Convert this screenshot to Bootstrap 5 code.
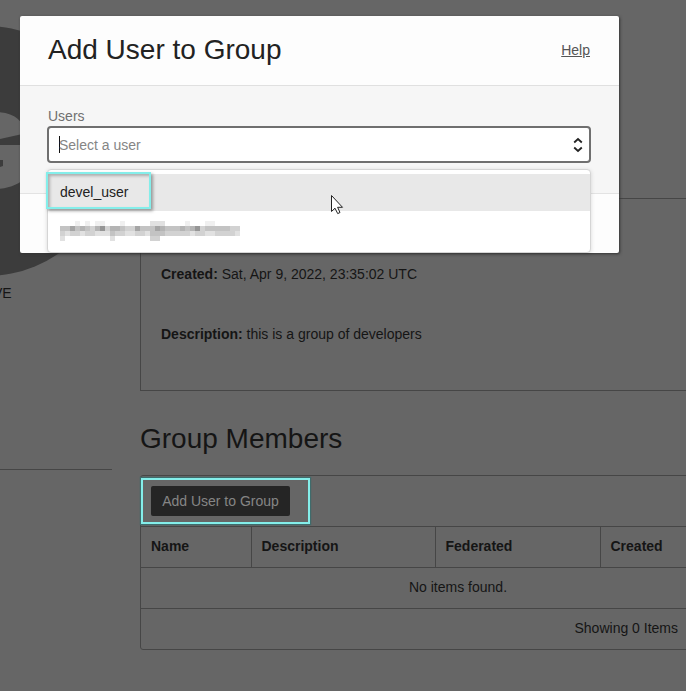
<!DOCTYPE html>
<html lang="en">
<head>
<meta charset="utf-8">
<meta name="viewport" content="width=device-width, initial-scale=1">
<title>Add User to Group</title>
<link href="https://cdn.jsdelivr.net/npm/bootstrap@5.3.0/dist/css/bootstrap.min.css" rel="stylesheet">
<style>
body{margin:0;height:691px;overflow:hidden;background:#666;color:#151515;font-family:"Liberation Sans",Arial,sans-serif;font-size:14px;line-height:20px}
.page{height:691px;overflow:hidden}
.side{width:112px;height:470px;border-bottom:1px solid #464646}
.avatar{position:absolute;left:-138px;top:26px}
.status{padding-top:283px;margin-left:-39px}
.main{width:636px;margin-left:28px}
.details{margin-top:198px;height:193px;border:1px solid #464646;padding:65px 20px 0}
.details p{margin-bottom:40px}
.title2{font-size:28px;line-height:36px;margin:30px 0 18px;font-weight:400}
.panel{border:1px solid #464646;border-radius:3px}
.toolbar{height:50px;padding:10px}
.btn-group-add{background:#252525;color:#858585;border:0;border-radius:2px;width:139px;height:30px;padding:0;font-size:14px;line-height:30px}
.members{table-layout:fixed;--bs-table-bg:transparent;--bs-table-color:#151515;border-color:#464646;width:634px}
.members>:not(caption)>*>*{height:41px;padding:0 10px 2px;border-top:1px solid #464646;border-bottom:0;vertical-align:middle;color:#151515}
.members>tbody>tr:last-child>*{height:40px}
.members th+th{border-left:1px solid #464646}
.members>tbody>tr>.count{padding-right:97px}
.ring2{position:absolute;left:141px;top:478px;width:169px;height:46px;border:2px solid #84eeea;box-shadow:0 0 1px 1px #3f6c6c}
.dialog{position:absolute;left:20px;top:16px;width:599px;height:237px;background:#fdfdfd;border-radius:2px;box-shadow:1px 1px 3px 0 #333;color:#222}
.dialog-head{height:70px;border-bottom:1px solid #e0e0e0;padding:0 29px 1px 28px}
.dialog-head h1{font-size:28px;line-height:36px;margin:0;font-weight:400}
.dialog-head a{color:#555}
.dialog-body{height:108px;background:#f6f6f6;border-bottom:1px solid #e3e3e3;padding:20px 28px 0 27px}
.dialog-body label{color:#707070;padding-left:1px;line-height:20px}
.combo{height:37px;border:2px solid #6f6f6f;border-radius:4px;background:#fff;color:#858585;padding:0 6px 0 10px}
.caret-bar{width:1px;height:17px;background:#111;margin-right:-1px}
.choices{position:absolute;left:47px;top:169px;width:544px;height:84px;padding-top:4px;background:#fff;border:1px solid #d5d5d5;border-radius:4px;box-shadow:0 1px 4px rgba(0,0,0,.15);color:#222}
.choice{height:37px;padding:0 0 2px 12px}
.choice.current{background:#e8e8e8}
.choice.hidden-name{padding-top:2px;padding-bottom:0}
.ring1{position:absolute;left:46px;top:172px;width:105px;height:37px;border:2px solid #84eeea;box-shadow:2px 2px 3px rgba(0,0,0,.35),inset 2px 2px 3px rgba(0,0,0,.25)}
.pointer{position:absolute;left:330px;top:194px}
</style>
</head>
<body class="position-relative">
<div class="page d-flex">
  <aside class="side flex-shrink-0">
    <svg class="avatar" width="250" height="250" viewBox="0 0 250 250" aria-hidden="true"><circle cx="125" cy="125" r="125" fill="#3c3c3c"/><path d="M165 107C160 94 152 86 133 86C108 86 92 103 92 125C92 148 108 163 133 163C147 163 157 158 165 151V119H130V134H141V140C124 147 115 139 115 125C115 114 124 112 138 113Z" fill="#666"/></svg>
    <div class="status">ACTIVE</div>
  </aside>
  <main class="main flex-shrink-0">
    <section class="details"><p><b>Created:</b> Sat, Apr 9, 2022, 23:35:02 UTC</p><p><b>Description:</b> this is a group of developers</p></section>
    <h2 class="title2">Group Members</h2>
    <section class="panel">
      <div class="toolbar"><button class="btn btn-group-add">Add User to Group</button></div>
      <table class="table members mb-0">
        <colgroup><col style="width:110px"><col style="width:184px"><col style="width:165px"><col></colgroup>
        <thead><tr><th>Name</th><th>Description</th><th>Federated</th><th>Created</th></tr></thead>
        <tbody><tr><td colspan="4" class="text-center">No items found.</td></tr><tr><td colspan="4" class="text-end count">Showing 0 Items</td></tr></tbody>
      </table>
    </section>
  </main>
</div>
<div class="ring2"></div>
<div class="dialog" role="dialog">
  <div class="dialog-head d-flex align-items-center justify-content-between"><h1>Add User to Group</h1><a href="#">Help</a></div>
  <div class="dialog-body">
    <label class="d-block">Users</label>
    <div class="combo d-flex align-items-center"><span class="caret-bar"></span><span class="flex-grow-1">Select a user</span>
      <svg width="10" height="16" viewBox="0 0 10 16" fill="none" stroke="#222" stroke-width="1.8"><path d="M1.2 5.5L5 2L8.8 5.5M1.2 10.5L5 14L8.8 10.5"/></svg></div>
  </div>
</div>
<div class="choices">
  <div class="choice current d-flex align-items-center">devel_user</div>
  <div class="choice hidden-name d-flex align-items-center"><svg id="masked" width="180" height="20" viewBox="0 0 36 4" preserveAspectRatio="none" shape-rendering="crispEdges" role="img" aria-label="Hidden address"></svg></div>
</div>
<div class="ring1"></div>
<svg class="pointer" width="14" height="22" viewBox="0 0 14 22"><path d="M1.5 1.5V17.5L5 14.2L7.7 19.6L10 18.5L7.6 13.3H12.5Z" fill="#fff" stroke="#222"/></svg>
<script src="https://cdn.jsdelivr.net/npm/bootstrap@5.3.0/dist/js/bootstrap.bundle.min.js"></script>
<script>
// Mosaic over the masked address: each digit is the darkness of one cell.
const rows = [
  "000101011000100000222000010001100000",
  "446454357355433644465444545734444433",
  "323323322243322332444333332332233332",
  "200000000020000000330000000000000000"
];
const ns = "http://www.w3.org/2000/svg", mosaic = document.getElementById("masked");
rows.forEach((r, y) => [...r].forEach((d, x) => {
  if (d === "0") return;
  const c = document.createElementNS(ns, "rect"), v = 255 - d * 15;
  c.setAttribute("x", x); c.setAttribute("y", y);
  c.setAttribute("width", 1); c.setAttribute("height", 1);
  c.setAttribute("fill", `rgb(${v},${v},${v})`);
  mosaic.appendChild(c);
}));
</script>
</body>
</html>
